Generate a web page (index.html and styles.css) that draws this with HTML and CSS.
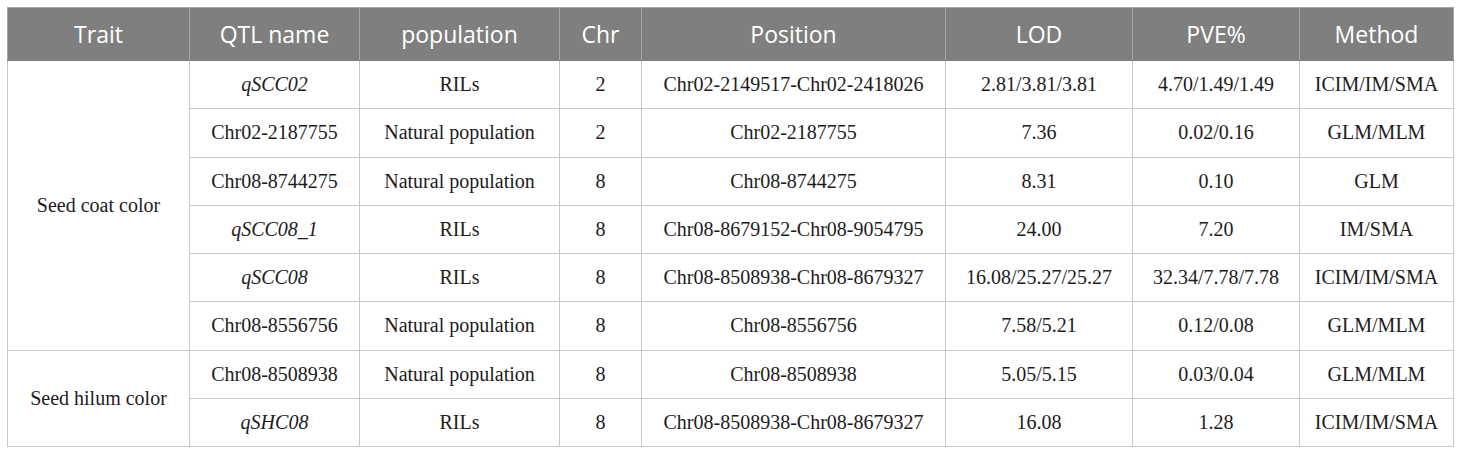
FILE: index.html
```html
<!DOCTYPE html>
<html lang="en">
<head>
<meta charset="utf-8">
<title>QTL table</title>
<link rel="stylesheet" href="styles.css">
</head>
<body>
<table class="qtl">
  <colgroup>
    <col class="c-trait"><col class="c-name"><col class="c-pop"><col class="c-chr"><col class="c-pos"><col class="c-lod"><col class="c-pve"><col class="c-method">
  </colgroup>
  <thead>
    <tr>
      <th>Trait</th><th>QTL name</th><th>population</th><th>Chr</th><th>Position</th><th>LOD</th><th>PVE%</th><th>Method</th>
    </tr>
  </thead>
  <tbody>
    <tr>
      <td rowspan="6">Seed coat color</td>
      <td class="it">qSCC02</td><td>RILs</td><td>2</td><td>Chr02-2149517-Chr02-2418026</td><td>2.81/3.81/3.81</td><td>4.70/1.49/1.49</td><td>ICIM/IM/SMA</td>
    </tr>
    <tr>
      <td>Chr02-2187755</td><td>Natural population</td><td>2</td><td>Chr02-2187755</td><td>7.36</td><td>0.02/0.16</td><td>GLM/MLM</td>
    </tr>
    <tr>
      <td>Chr08-8744275</td><td>Natural population</td><td>8</td><td>Chr08-8744275</td><td>8.31</td><td>0.10</td><td>GLM</td>
    </tr>
    <tr>
      <td class="it">qSCC08_1</td><td>RILs</td><td>8</td><td>Chr08-8679152-Chr08-9054795</td><td>24.00</td><td>7.20</td><td>IM/SMA</td>
    </tr>
    <tr>
      <td class="it">qSCC08</td><td>RILs</td><td>8</td><td>Chr08-8508938-Chr08-8679327</td><td>16.08/25.27/25.27</td><td>32.34/7.78/7.78</td><td>ICIM/IM/SMA</td>
    </tr>
    <tr>
      <td>Chr08-8556756</td><td>Natural population</td><td>8</td><td>Chr08-8556756</td><td>7.58/5.21</td><td>0.12/0.08</td><td>GLM/MLM</td>
    </tr>
    <tr>
      <td rowspan="2">Seed hilum color</td>
      <td>Chr08-8508938</td><td>Natural population</td><td>8</td><td>Chr08-8508938</td><td>5.05/5.15</td><td>0.03/0.04</td><td>GLM/MLM</td>
    </tr>
    <tr>
      <td class="it">qSHC08</td><td>RILs</td><td>8</td><td>Chr08-8508938-Chr08-8679327</td><td>16.08</td><td>1.28</td><td>ICIM/IM/SMA</td>
    </tr>
  </tbody>
</table>
</body>
</html>
```

FILE: styles.css
```css
html, body {
  margin: 0;
  padding: 0;
  background: #ffffff;
}
body {
  padding: 7px;
}
.qtl {
  border-collapse: collapse;
  table-layout: fixed;
  width: 1446px;
}
.c-trait { width: 182px; }
.c-name { width: 170px; }
.c-pop { width: 200px; }
.c-chr { width: 82px; }
.c-pos { width: 304px; }
.c-lod { width: 187px; }
.c-pve { width: 167px; }
.c-method { width: 154px; }

.qtl th {
  background: #7f7f7f;
  color: #ffffff;
  font-family: "Open Sans", "Liberation Sans", sans-serif;
  font-weight: 400;
  font-size: 23px;
  height: 52px;
  padding: 0;
  text-align: center;
  vertical-align: middle;
  border: 1px solid #a6a6a6;
  border-bottom-color: #7f7f7f;
}
.qtl td {
  font-family: "Liberation Serif", "Times New Roman", serif;
  font-size: 20px;
  color: #1e1b1c;
  height: 47.25px;
  padding: 0;
  text-align: center;
  vertical-align: middle;
  border: 1px solid #c8c8c8;
}
.qtl td.it {
  font-style: italic;
}
```
